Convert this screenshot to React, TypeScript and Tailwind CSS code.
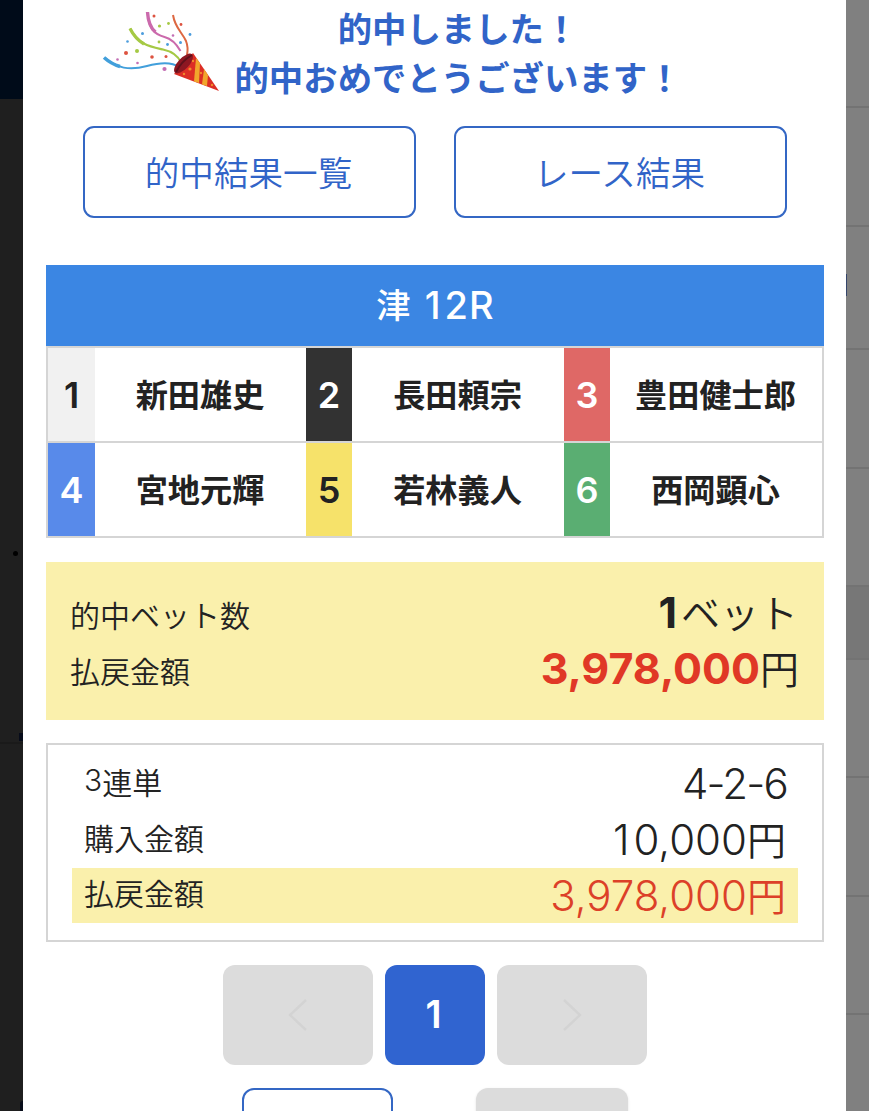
import type { ReactNode } from 'react';
import { clsx } from 'clsx';

type Racer = {
  no: number;
  name: string;
  color: string;
};

const RACERS: Racer[] = [
  { no: 1, name: '新田雄史', color: 'bg-[#f1f1f1] text-[#222]' },
  { no: 2, name: '長田頼宗', color: 'bg-[#323232] text-white' },
  { no: 3, name: '豊田健士郎', color: 'bg-[#df6866] text-white' },
  { no: 4, name: '宮地元輝', color: 'bg-[#588aea] text-white' },
  { no: 5, name: '若林義人', color: 'bg-[#f6e26a] text-[#222]' },
  { no: 6, name: '西岡顕心', color: 'bg-[#5aae72] text-white' },
];

// Row heights of the dimmed list behind the dialog
const BACK_ROWS = [
  'h-[108px]',
  'h-[119px]',
  'h-[123px]',
  'h-[119px]',
  'h-[118px]',
  'h-[73px] bg-[#777]',
  'h-[118px]',
  'h-[119px]',
  'h-[118px]',
];

function Cracker() {
  return (
    <svg viewBox="0 0 150 110" className="h-[110px] w-[150px]" fill="none">
      <path d="M15 58c12 10 24 13 42 8c15-4 25-4 32 1" stroke="#429fdb" strokeWidth="2" />
      <path d="M14 57.500c5 4.500 9 7 16 9" stroke="#429fdb" strokeWidth="3.500" />
      <path d="M40 28.500c8 16 20 18 33 21c9 2 15 6 18 13" stroke="#a5c944" strokeWidth="2.200" />
      <path d="M40 28.500c4 8 8 12 14 15.500" stroke="#a5c944" strokeWidth="3.200" />
      <path d="M57.500 12c1 16 6 22 17 25c8 2 12 7 16 14" stroke="#cb6aac" strokeWidth="2" />
      <path d="M57.500 12c.5 9 3 16 8 20" stroke="#cb6aac" strokeWidth="3.400" />
      <path d="M83 15c2 13 9 17 13 26c2 5 2 9 1 14" stroke="#dd6842" strokeWidth="2" />
      <path d="M103 53L129 91L84 74z" fill="#dc2e25" />
      <path d="M106 58l4 5l-1 20l-5-1.500z" fill="#f1a62c" />
      <path d="M114 69l4 6l-1 11l-5-1.500z" fill="#f1a62c" />
      <ellipse cx="93.500" cy="63.500" rx="12.500" ry="5.500" transform="rotate(-47 93.500 63.500)" fill="#8d1722" />
      <path d="M86 72c4-8 9-13 16-17" stroke="#5d111b" strokeWidth="2" />
      <g fill="#f08a2c">
        <circle cx="100" cy="69" r="1.600" />
        <circle cx="94" cy="74" r="1.200" />
        <circle cx="103" cy="61" r="1.200" />
        <circle cx="111" cy="73" r="1.200" />
        <circle cx="122" cy="85" r="1.200" />
      </g>
      <g fill="#dd5340">
        <circle cx="64" cy="16" r="1.500" />
        <circle cx="91" cy="24.500" r="1.400" />
        <circle cx="36" cy="53" r="2" />
        <circle cx="62" cy="57" r="1.800" />
        <circle cx="76" cy="56.500" r="1.500" />
      </g>
      <g fill="#a5c944">
        <circle cx="69.500" cy="26" r="1.600" />
        <circle cx="78.500" cy="23.500" r="1.400" />
        <circle cx="47" cy="51" r="2" />
        <circle cx="69" cy="42" r="1.400" />
      </g>
      <g fill="#4c9ddd">
        <circle cx="52.500" cy="33.500" r="1.500" />
        <circle cx="37.500" cy="41.500" r="1.300" />
        <circle cx="77.500" cy="44.500" r="1.400" />
        <circle cx="90.500" cy="42.500" r="1.500" />
        <circle cx="100" cy="34.500" r="1.400" />
      </g>
      <g fill="#c36eb4">
        <circle cx="83" cy="35.500" r="1.300" />
        <circle cx="27.500" cy="59.500" r="1.300" />
        <circle cx="47.500" cy="63" r="1.300" />
        <circle cx="74.500" cy="69" r="2.100" />
      </g>
    </svg>
  );
}

function OutlineButton({ children }: { children: ReactNode }) {
  return (
    <button className="h-[92px] w-[333px] rounded-[11px] border-2 border-[#3467c4] pr-[2px] pb-[1px] text-[34.6px] font-[350] text-[#3164c8]">
      {children}
    </button>
  );
}

function PagerArrow({ d }: { d: string }) {
  return (
    <button disabled className="flex h-[100px] w-[150px] items-center justify-center rounded-[12px] bg-[#dcdcdc]">
      <svg viewBox="0 0 20 32" className="h-8 w-5" fill="none" stroke="#d3d3d3" strokeWidth="2.400">
        <path d={d} />
      </svg>
    </button>
  );
}

function Row({ label, children, className }: { label: ReactNode; children: ReactNode; className?: string }) {
  return (
    <div className={clsx('flex items-center justify-between whitespace-nowrap', className)}>
      <span className="text-[30px] leading-none font-[350]">{label}</span>
      <span className="flex items-center text-[39px] leading-none font-[350]">{children}</span>
    </div>
  );
}

function Num({ children, className }: { children: ReactNode; className: string }) {
  return <span className={clsx('font-[Inter]', className)}>{children}</span>;
}

function Yen() {
  return <span className="pb-[3px]">円</span>;
}

export default function App() {
  return (
    <div className="flex h-[1111px] w-[869px] overflow-hidden bg-white font-['Noto_Sans_CJK_JP',sans-serif] text-[#222]">
      {/* Dimmed page, left */}
      <div className="relative w-[23px] shrink-0 bg-[#1f1f1f]">
        <div className="h-[99px] bg-[#000b19]" />
        <span className="absolute top-[551px] left-[13px] size-[5px] rounded-full bg-black" />
        <span className="absolute top-[733px] right-0 h-2 w-1 bg-[#060b1a]" />
        <span className="absolute top-[742px] left-0 h-[2px] w-full bg-[#1a1a1a]" />
        <span className="absolute top-[1101px] right-0 h-[10px] w-[3px] rounded-tl-full bg-[#080d1a]" />
      </div>

      {/* Dialog */}
      <div className="w-[823px] shrink-0 pr-[22px] pl-[23px]">
        <div className="flex h-[126px] pl-[44px]">
          <Cracker />
          <h1 className="-ml-[7px] w-[450px] pt-[3px] text-center text-[34.4px] leading-[49px] font-bold whitespace-nowrap text-[#3164c8]">
            的中しました！
            <br />
            的中おめでとうございます！
          </h1>
        </div>

        <div className="flex justify-center gap-[38px]">
          <OutlineButton>的中結果一覧</OutlineButton>
          <OutlineButton>レース結果</OutlineButton>
        </div>

        {/* Race card */}
        <div className="mt-[47px]">
          <h2 className="flex h-[81px] items-center justify-center gap-[14px] bg-[#3b86e3] text-[34.5px] font-medium text-white">
            <span className="pb-[3px]">津</span>
            <Num className="text-[38px] font-medium">
              <span className="mr-[4px]">1</span>2<span className="ml-[1px]">R</span>
            </Num>
          </h2>
          <div className="grid grid-cols-[47px_211px_46px_212px_46px_1fr] border-2 border-b-0 border-[#d5d5d5]">
            {RACERS.map((r) => (
              <div key={r.no} className="contents">
                <div
                  className={clsx(
                    'flex h-[95px] items-center justify-center border-b-2 border-[#d5d5d5] pt-[1px] font-[Inter] text-[36px] font-semibold',
                    r.color,
                  )}
                >
                  {r.no}
                </div>
                <div className="flex h-[95px] items-center justify-center border-b-2 border-[#d5d5d5] pr-[1px] pb-[3px] text-[32.2px] font-bold">
                  {r.name}
                </div>
              </div>
            ))}
          </div>
        </div>

        {/* Total */}
        <div className="mt-[24px] flex h-[158px] flex-col justify-center bg-[#faf0ac] pr-[25px] pl-[24px]">
          <Row label="的中ベット数" className="h-[56px] pt-[2px]">
            <Num className="mr-1 pb-[3px] text-[43px] font-bold">1</Num>
            <span className="pr-[1px] pb-[6px]">ベット</span>
          </Row>
          <Row label="払戻金額" className="h-[56px] pt-[2px]">
            <Num className="pb-[4px] text-[43px] font-bold text-[#e03826]">3,978,000</Num>
            <span className="pb-[5px]">円</span>
          </Row>
        </div>

        {/* Winning ticket */}
        <div className="mt-[23px] h-[199px] border-2 border-[#d5d5d5] px-[24px] pt-[11px]">
          <Row
            label={
              <span className="flex items-center pb-[7px]">
                <Num className="pb-[1px] text-[30px] font-[350]">3</Num>連単
              </span>
            }
            className="h-[56px] px-[12px]"
          >
            <Num className="-mr-[1px] text-[42px] font-[350] tracking-[-1.800px]">4-2-6</Num>
          </Row>
          <Row label={<span className="block pb-[7px]">購入金額</span>} className="h-[56px] px-[12px]">
            <Num className="text-[42px] font-[350]">
              <span className="mr-[4px]">1</span>0,000
            </Num>
            <Yen />
          </Row>
          <Row label={<span className="block pb-[7px]">払戻金額</span>} className="h-[55px] bg-[#faf0ac] px-[12px]">
            <span className="flex items-center text-[#dc4028]">
              <Num className="text-[42px] font-[350]">3,978,000</Num>
              <Yen />
            </span>
          </Row>
        </div>

        <div className="mt-[23px] flex justify-center gap-[12px]">
          <PagerArrow d="M18 1L2 16L18 31" />
          <button className="size-[100px] rounded-[12px] bg-[#3064d0] pr-[3px] pb-[2px] font-[Inter] text-[38px] font-semibold text-white">
            1
          </button>
          <PagerArrow d="M2 1L18 16L2 31" />
        </div>

        <div className="mt-[23px] flex justify-center gap-[83px]">
          <div className="h-[80px] w-[151px] rounded-[12px] border-2 border-[#3467c4]" />
          <div className="h-[80px] w-[152px] rounded-[12px] bg-[#dcdcdc] shadow" />
        </div>
      </div>

      {/* Dimmed page, right */}
      <div className="relative w-[23px] shrink-0 bg-[#808080]">
        {BACK_ROWS.map((row, i) => (
          <div key={i} className={clsx('border-b-2 border-[#737373]', row)} />
        ))}
        <span className="absolute top-[274px] left-0 h-[22px] w-px bg-[#34456b]" />
      </div>
    </div>
  );
}
